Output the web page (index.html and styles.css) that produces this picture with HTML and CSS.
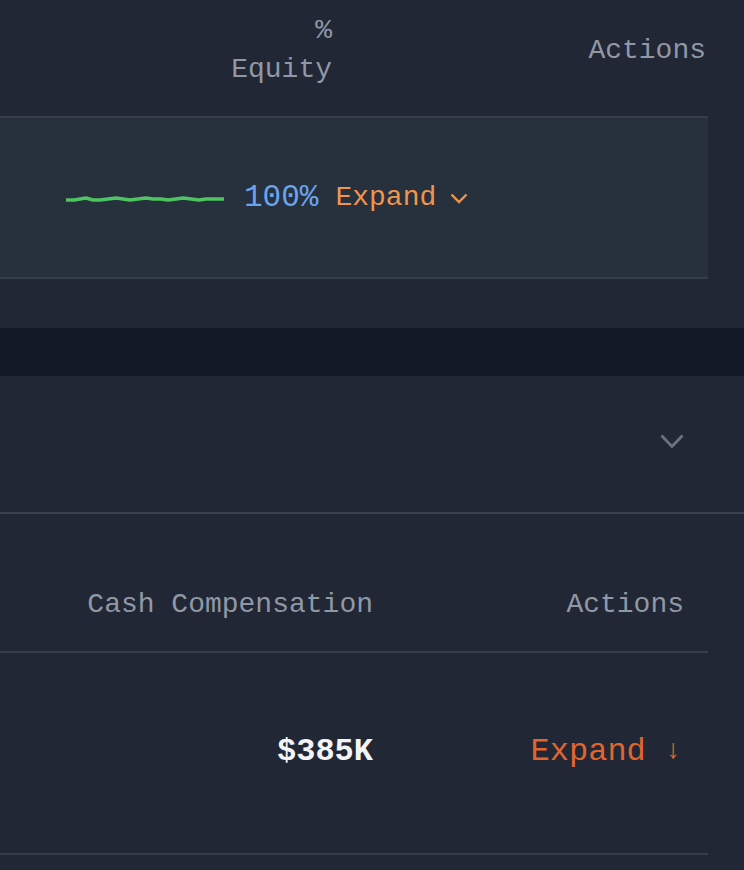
FILE: index.html
```html
<!DOCTYPE html>
<html lang="en">
<head>
<meta charset="utf-8">
<title>Compensation</title>
<link rel="stylesheet" href="styles.css">
</head>
<body>
<div class="page">
  <section class="table table-equity">
    <div class="thead">
      <div class="th th-equity">%<br>Equity</div>
      <div class="th th-actions">Actions</div>
    </div>
    <div class="row row-hover">
      <svg class="spark" width="158" height="12" viewBox="0 0 158 12">
        <polyline points="0,7 8,7 14,6 20,5 27,7 34,7 42,6 50,5 57,6 64,7 72,6 80,5 87,6 95,6 102,7 110,6 117,5 125,6 133,7 140,6 148,6 157,6" fill="none" stroke="#4fc462" stroke-width="3.4" stroke-linejoin="round" stroke-linecap="round"/>
      </svg>
      <span class="pct">100%</span>
      <span class="expand expand-top">Expand
        <svg class="chev" width="18" height="11" viewBox="0 0 18 11"><path d="M1.5 1.5 L9 9 L16.5 1.5" fill="none" stroke="#f0954a" stroke-width="2.4"/></svg>
      </span>
    </div>
  </section>

  <div class="spacer"></div>
  <div class="band"></div>

  <section class="panel">
    <svg class="panel-chev" width="24" height="15" viewBox="0 0 24 15"><path d="M1.5 1.5 L12 12.5 L22.5 1.5" fill="none" stroke="#6b7280" stroke-width="2.8"/></svg>
  </section>

  <section class="table table-cash">
    <div class="thead thead-cash">
      <div class="th th-cash">Cash Compensation</div>
      <div class="th th-actions2">Actions</div>
    </div>
    <div class="row row-cash">
      <div class="cell-amount">$385K</div>
      <div class="cell-action"><span class="expand expand-bottom">Expand <span class="arrow">↓</span></span></div>
    </div>
  </section>
</div>
</body>
</html>
```

FILE: styles.css
```css
* { box-sizing: border-box; }

html, body {
  margin: 0;
  padding: 0;
  background: #212735;
}

body {
  font-family: "Liberation Mono", "Courier New", monospace;
  color: #9098a5;
  width: 744px;
  height: 870px;
  overflow: hidden;
}

.page {
  display: flex;
  flex-direction: column;
}

.table {
  width: 708px;
}

.thead {
  display: grid;
  grid-template-columns: 332px 1fr auto;
  align-items: center;
  height: 116px;
  padding-bottom: 16px;
  font-size: 28px;
  line-height: 39px;
}

.th-equity {
  text-align: right;
  grid-column: 1;
}

.th-actions {
  grid-column: 3;
  padding-right: 2px;
}

.row-hover {
  height: 163px;
  background: #27303d;
  border-top: 2px solid #363e4b;
  border-bottom: 2px solid #363e4b;
  display: flex;
  align-items: center;
  padding-left: 66px;
}

.spark {
  display: block;
  margin-top: 2px;
}

.pct {
  margin-left: 20px;
  color: #6aa3ee;
  font-size: 31px;
}

.expand {
  display: inline-flex;
  align-items: center;
}

.expand-top {
  margin-left: 17px;
  font-size: 28px;
  color: #f0954a;
}

.chev {
  margin-left: 14px;
  margin-top: 2px;
}

.spacer {
  height: 49px;
}

.band {
  height: 48px;
  background: #121927;
}

.panel {
  height: 138px;
  border-bottom: 2px solid #3a404e;
  display: flex;
  align-items: center;
  justify-content: flex-end;
  padding-right: 60px;
  padding-bottom: 6px;
}

.thead-cash {
  grid-template-columns: 373px 1fr auto;
  height: 139px;
  align-items: end;
  padding-bottom: 27px;
  border-bottom: 2px solid #363e4b;
}

.th-cash {
  text-align: right;
}

.th-actions2 {
  grid-column: 3;
  padding-right: 24px;
}

.row-cash {
  display: grid;
  grid-template-columns: 373px 1fr auto;
  align-items: center;
  height: 202px;
  border-bottom: 2px solid #363e4b;
  padding-bottom: 4px;
  font-size: 32px;
}

.cell-amount {
  text-align: right;
  font-weight: bold;
  color: #f3f4f6;
}

.cell-action {
  grid-column: 3;
  padding-right: 27px;
}

.expand-bottom {
  color: #e0652f;
}

.arrow {
  margin-left: 19px;
  font-size: 27px;
}
```
